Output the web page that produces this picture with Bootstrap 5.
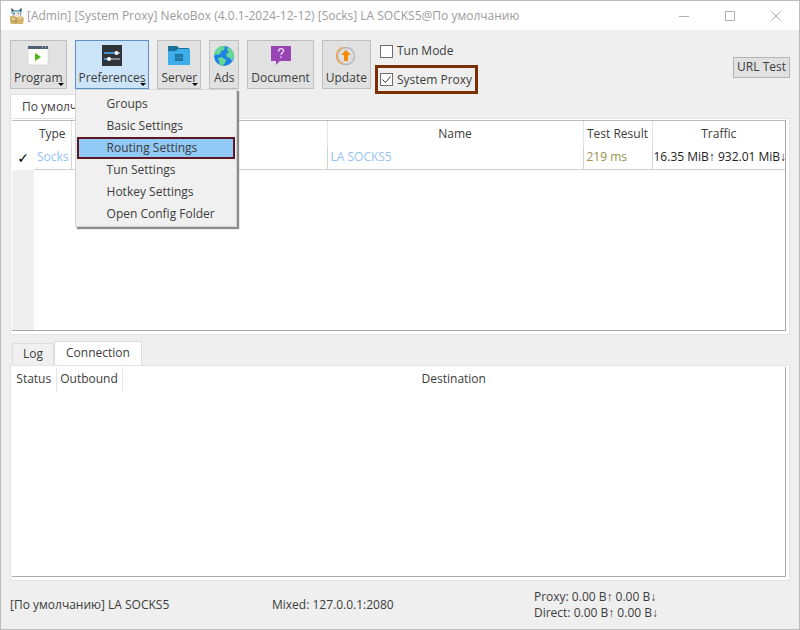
<!DOCTYPE html>
<html lang="en">
<head>
<meta charset="utf-8">
<meta name="viewport" content="width=device-width, initial-scale=1">
<title>NekoBox</title>
<link href="https://cdn.jsdelivr.net/npm/bootstrap@5.3.0/dist/css/bootstrap.min.css" rel="stylesheet">
<style>
  body { font-family: "Open Sans", "Noto Sans", sans-serif; font-size: 12px; line-height: 16px; color: #3c3c3c; }
  .app-window { background: #efefef; border: 1px solid #bcbcbc; }
  .titlebar { height: 29px; background: #fff; color: #9c9c9c; gap: 2px; }
  .win-btns { gap: 0; }
  .win-btn { width: 46px; height: 28px; color: #b0b0b0; background: none; border: 0; padding: 0; }
  .toolbar { padding: 10px 9px 0 9px; gap: 8px; }
  .tool-btn { height: 49px; padding: 0 3px; background: #e1e1e1; border: 1px solid #bfbfbf; color: #3c3c3c; font-size: inherit; line-height: 16px; border-radius: 0; position: relative; white-space: nowrap; }
  .tool-btn svg { display: block; margin: 2px auto 3px; }
  .tool-btn.show { background: #cce4f7; border-color: #5f8fc4; }
  .tool-btn.dropdown-toggle::after { position: absolute; right: 2px; bottom: 2px; margin: 0; border-top: 3px solid #000; border-right: 3px solid transparent; border-left: 3px solid transparent; }
  .app-menu { min-width: 162px; padding: 3px 1px 1px; margin: 0; font-size: inherit; color: inherit; background: #f0f0f0; border: 1px solid #d5d5d5; border-radius: 0; box-shadow: 2px 2px 1px #8c8c8c; }
  .app-menu .dropdown-item { height: 22px; padding: 2px 0 2px 29px; border: 1px solid transparent; color: inherit; }
  .app-menu .dropdown-item.active { background: #91c9f7; border: 2px solid #5e1620; padding: 1px 0 1px 28px; }
  .checks { margin-left: -4px; gap: 3px; }
  .check-line { height: 22px; padding: 0 5px; gap: 4px; }
  .check-line .form-check-input { width: 13px; height: 13px; margin: 0; border: 1px solid #6e6e6e; border-radius: 0; background-color: #fff; background-size: 13px 13px; }
  .check-line .form-check-input:checked { background-image: url("data:image/svg+xml,%3csvg xmlns='http://www.w3.org/2000/svg' viewBox='0 0 13 13'%3e%3cpath d='M2.5 6.5l3 3 5-6' fill='none' stroke='%23333'/%3e%3c/svg%3e"); }
  .check-line.marked { border: 3px solid #7b3003; height: 29px; padding: 0 3px 0 2px; }
  .plain-btn { height: 21px; padding: 0 3px; background: #e1e1e1; border: 1px solid #b4b4b4; color: inherit; font-size: inherit; line-height: 16px; border-radius: 0; }
  .main-area { padding: 0 9px; }
  .tab-btn { border: 1px solid #dedede; border-bottom: 0; background: #f0f0f0; color: inherit; padding: 0 10px; height: 22px; }
  .tab-btn.active { background: #fff; height: 24px; padding: 0 11px; }
  .lower-tabs { margin-top: 6px; padding-left: 2px; }
  .pane { background: #fff; border: 1px solid #e4e4e4; padding: 1px 3px 3px 1px; flex: 1 1 0; min-height: 0; }
  .sheet { border-right: 1px solid #aaa; border-bottom: 1px solid #aaa; background: #fff; }
  .sheet-top { border-top: 1px solid #b9bcc1; }
  .grid { width: 100%; table-layout: fixed; color: inherit; }
  .grid th { font-weight: 400; text-align: center; height: 25px; padding: 0; border-right: 1px solid #e5e5e5; white-space: nowrap; }
  .grid td { height: 23px; padding: 0 0 0 3px; border-right: 1px solid #d5d5d5; border-bottom: 1px solid #d0d0d0; white-space: nowrap; }
  .grid th:first-child, .grid th:last-child, .grid td:first-child, .grid td:last-child { border-right: 0; }
  .grid td:last-child { padding-left: 1px; color: #222; }
  .conn-grid th:first-child { border-right: 1px solid #e5e5e5; }
  .grid .tick { border-bottom: 0; padding: 0; color: #000; font: 14px "DejaVu Sans", sans-serif; text-align: center; }
  .c-tick, .gutter { width: 22px; }
  .gutter { background: #efefef; }
  .c-type { width: 37px; }
  .c-test { width: 69px; }
  .c-traffic { width: 133px; }
  .c-status { width: 44px; }
  .c-out { width: 66px; }
  .link-blue { color: #96c3f5; }
  .olive { color: #979347; }
  .status { height: 48px; padding: 0 3px 0 9px; }
</style>
</head>
<body>
<div class="app-window d-flex flex-column vh-100">
  <header class="titlebar d-flex align-items-center flex-shrink-0 ps-2">
    <svg width="16" height="18" viewBox="0 0 16 18" aria-hidden="true">
      <path d="M3 2l2 1h5l2-2 1 3-1 5H4L2 5z" fill="#86b8d2"/><path d="M2 1l3 2-2 2zM13 1l-3 2 2 2z" fill="#43505f"/>
      <path d="M5 5h6v4H5z" fill="#eee0d8"/><path d="M5 6h1v1H5zM9 6h1v1H9z" fill="#486a80"/>
      <path d="M1 9h5l1 1h7l1 2-1 5H2l-1-3z" fill="#d2b36d"/><path d="M3 11h4v3H3zM9 9h4v3H9z" fill="#e5cd8d"/><path d="M7 10v6M2 14h5" stroke="#a98945" fill="none"/>
    </svg>
    <span class="flex-grow-1 text-nowrap">[Admin] [System Proxy] NekoBox (4.0.1-2024-12-12) [Socks] LA SOCKS5@По умолчанию</span>
    <div class="win-btns d-flex">
      <button class="win-btn" type="button" aria-label="Minimize"><svg width="12" height="12" fill="none" stroke="currentColor"><path d="M1 6.500h10"/></svg></button>
      <button class="win-btn" type="button" aria-label="Maximize"><svg width="12" height="12" fill="none" stroke="currentColor"><path d="M1.500 1.500h9v9h-9z"/></svg></button>
      <button class="win-btn" type="button" aria-label="Close"><svg width="12" height="12" fill="none" stroke="currentColor"><path d="M1 1l10 10M11 1L1 11"/></svg></button>
    </div>
  </header>

  <div class="toolbar d-flex align-items-start flex-shrink-0">
    <button class="tool-btn dropdown-toggle" type="button">
      <svg width="22" height="22" viewBox="0 0 22 22"><path d="M1 2h20v18H1z" fill="#fff" stroke="#ccc" stroke-width=".6"/><path d="M1 1h20v3H1z" fill="#526273"/><path d="M15 2h1M18 2h1" stroke="#c8d2da"/><path d="M8 8l6 4-6 4z" fill="#4cb615"/></svg>Program</button>
    <div class="dropdown">
      <button class="tool-btn dropdown-toggle show" type="button" data-bs-toggle="dropdown" aria-expanded="true">
        <svg width="22" height="22" viewBox="0 0 22 22"><path d="M1 0h20v21H1z" fill="#303338"/><path d="M3 8h16M3 14h16" stroke="#d9dde1" stroke-width="1"/><path d="M3 8h12M3 14h4" stroke="#2c95e2" stroke-width="1.500"/><circle cx="15.500" cy="8" r="2" fill="#fff"/><circle cx="8" cy="14" r="2" fill="#fff"/></svg>Preferences</button>
      <div class="dropdown-menu show app-menu">
        <a class="dropdown-item" href="#">Groups</a>
        <a class="dropdown-item" href="#">Basic Settings</a>
        <a class="dropdown-item active" href="#">Routing Settings</a>
        <a class="dropdown-item" href="#">Tun Settings</a>
        <a class="dropdown-item" href="#">Hotkey Settings</a>
        <a class="dropdown-item" href="#">Open Config Folder</a>
      </div>
    </div>
    <button class="tool-btn dropdown-toggle" type="button">
      <svg width="22" height="22" viewBox="0 0 22 22"><path d="M0 1h9l2 2h10v8H0z" fill="#1c719a"/><path d="M0 6h8l2-2h12v16H0z" fill="#3daee9"/><path d="M7 9h8v7H7z" fill="#1b6f9b"/><path d="M7 12.500h8M11 9v7M9 10v5M13 10v5" stroke="#3592c4" stroke-width=".7"/></svg>Server</button>
    <button class="tool-btn" type="button">
      <svg width="22" height="22" viewBox="0 0 22 22"><circle cx="11" cy="11" r="10" fill="#1c82e4"/><path d="M1.200 9C2 4.500 5.500 1.500 10 1l2 1-1 3-3 1v2L5 10l-2-1-1 2zM5 13l4-1 4 3-1 3-3 3-2-1-1-4zM15 2c3 1.500 6 5 6 9l-2 5-2-3-3-1-1-3 3-2-2-2z" fill="#66d995"/></svg>Ads</button>
    <button class="tool-btn" type="button">
      <svg width="22" height="22" viewBox="0 0 22 22"><path d="M1 1h20v15H10l-4 4v-4H1z" fill="#9745b5"/><path d="M8.500 6.500c0-4 5-3.500 5-.8 0 2-2.500 1.900-2.500 4.300M11 11.500v1.500" fill="none" stroke="#ead5f1" stroke-width="1.400"/></svg>Document</button>
    <button class="tool-btn" type="button">
      <svg width="22" height="22" viewBox="0 0 22 22"><circle cx="11" cy="11" r="8.500" fill="#dedede" stroke="#afb7c0" stroke-width="1.300"/><path d="M8 19a8.500 8.500 0 0 1 0-16.500" fill="none" stroke="#f4a24a" stroke-width="1.500"/><path d="M11 5l5 5h-3v6H9v-6H6z" fill="#f68a08"/></svg>Update</button>
    <div class="checks d-flex flex-column align-items-start">
      <div class="check-line d-flex align-items-center">
        <input class="form-check-input" type="checkbox" id="tun"><label for="tun">Tun Mode</label>
      </div>
      <div class="check-line marked d-flex align-items-center">
        <input class="form-check-input" type="checkbox" id="sysproxy" checked><label for="sysproxy">System Proxy</label>
      </div>
    </div>
    <button class="plain-btn ms-auto align-self-center" type="button">URL Test</button>
  </div>

  <main class="main-area d-flex flex-column flex-grow-1">
    <div class="d-flex align-items-end" role="tablist">
      <button class="tab-btn active" type="button" role="tab">По умолчанию</button>
    </div>
    <section class="pane d-flex flex-column">
      <div class="sheet sheet-top d-flex flex-column flex-grow-1">
        <table class="grid">
          <colgroup><col class="c-tick"><col class="c-type"><col><col><col class="c-test"><col class="c-traffic"></colgroup>
          <thead><tr><th></th><th>Type</th><th></th><th>Name</th><th>Test Result</th><th>Traffic</th></tr></thead>
          <tbody><tr><td class="tick">✓</td><td class="link-blue">Socks</td><td></td><td class="link-blue">LA SOCKS5</td><td class="olive">219 ms</td><td>16.35 MiB↑ 932.01 MiB↓</td></tr></tbody>
        </table>
        <div class="gutter flex-grow-1"></div>
      </div>
    </section>
    <div class="lower-tabs d-flex align-items-end" role="tablist">
      <button class="tab-btn" type="button" role="tab">Log</button>
      <button class="tab-btn active" type="button" role="tab">Connection</button>
    </div>
    <section class="pane d-flex flex-column">
      <div class="sheet flex-grow-1">
        <table class="grid conn-grid">
          <colgroup><col class="c-status"><col class="c-out"><col></colgroup>
          <thead><tr><th>Status</th><th>Outbound</th><th>Destination</th></tr></thead>
        </table>
      </div>
    </section>
  </main>

  <footer class="status row g-0 align-items-center flex-shrink-0">
    <div class="col-4">[По умолчанию] LA SOCKS5</div>
    <div class="col-4">Mixed: 127.0.0.1:2080</div>
    <div class="col-4">Proxy: 0.00 B↑ 0.00 B↓<br>Direct: 0.00 B↑ 0.00 B↓</div>
  </footer>
</div>
<script src="https://cdn.jsdelivr.net/npm/bootstrap@5.3.0/dist/js/bootstrap.bundle.min.js"></script>
</body>
</html>
